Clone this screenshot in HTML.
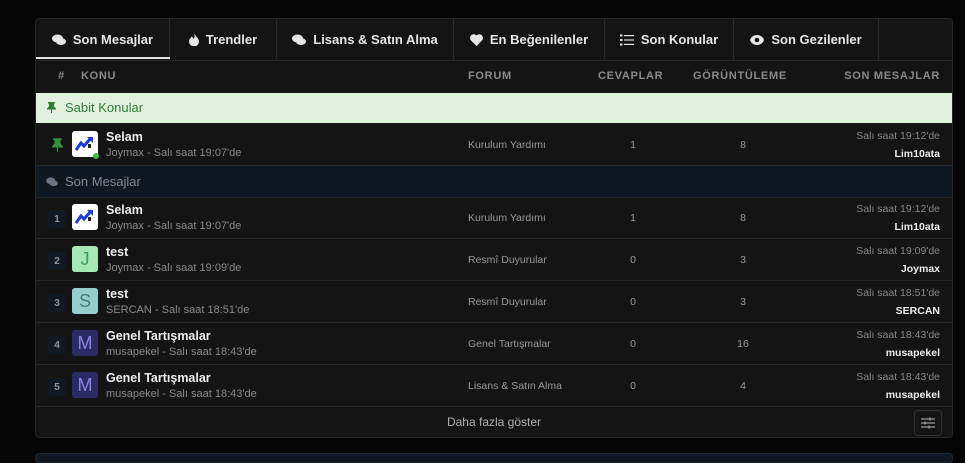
<!DOCTYPE html>
<html><head><meta charset="utf-8"><style>
*{margin:0;padding:0;box-sizing:border-box}
body{width:965px;height:458px;background:#050505;font-family:"Liberation Sans",sans-serif;position:relative;overflow:hidden;color:#ddd}
.p{position:absolute;left:35px;top:18px;width:918px;height:420px;background:#141414;border:1px solid #262626;border-radius:4px;overflow:hidden}
.tab{position:absolute;top:0;height:41px;border-right:1px solid #2a2a2a;font-size:13px;font-weight:bold;color:#e6e6e6;display:flex;align-items:center;justify-content:center;gap:7px}
.tab svg{fill:#e6e6e6}
.hl{position:absolute;left:0;right:0;height:1px;background:#262626}
.hd{position:absolute;top:51px;font-size:11px;font-weight:bold;color:#8a8a8a;letter-spacing:0.7px}
.abs{position:absolute}
.t{position:absolute;left:70px;font-size:12.5px;font-weight:bold;color:#eee}
.s{position:absolute;left:70px;font-size:11px;color:#8a8a8a}
.f{position:absolute;left:432px;font-size:10.5px;color:#9a9a9a}
.n{position:absolute;font-size:10.5px;color:#9a9a9a;width:30px;text-align:center}
.r1{position:absolute;right:12px;font-size:10.5px;color:#888;text-align:right}
.r2{position:absolute;right:12px;font-size:10.5px;font-weight:bold;color:#eee;text-align:right}
.av{position:absolute;left:36px;width:26px;height:26px;border-radius:3px;display:flex;align-items:center;justify-content:center;font-size:18px}
.rk{position:absolute;left:12px;width:18px;height:18px;border-radius:3px;background:#111a24;color:#8a96a6;font-size:10px;font-weight:bold;display:flex;align-items:center;justify-content:center}
</style></head><body>
<div class="p">
<div class="tab" style="left:0;width:134px"><svg width="14" height="12" viewBox="0 0 14 12"><ellipse cx="5.5" cy="4.5" rx="5.5" ry="4"/><ellipse cx="9" cy="7.5" rx="5" ry="3.5"/></svg>Son Mesajlar</div>
<div class="abs" style="left:0;top:38px;width:134px;height:2px;background:#e6e6e6"></div>
<div class="tab" style="left:134px;width:107px"><svg width="10" height="13" viewBox="0 0 10 13"><path d="M5 0C6 3 10 5 10 8.5A5 5 0 0 1 0 8.5C0 6 2 5 3 3C3.5 5 4.5 5.5 5 5.5C6 4 5.5 2 5 0Z"/></svg>Trendler</div>
<div class="tab" style="left:241px;width:177px"><svg width="14" height="12" viewBox="0 0 14 12"><ellipse cx="5.5" cy="4.5" rx="5.5" ry="4"/><ellipse cx="9" cy="7.5" rx="5" ry="3.5"/></svg>Lisans &amp; Satın Alma</div>
<div class="tab" style="left:418px;width:151px"><svg width="13" height="12" viewBox="0 0 13 12"><path d="M6.5 12L1 6.5A3.3 3.3 0 0 1 6.5 1.5A3.3 3.3 0 0 1 12 6.5Z"/></svg>En Beğenilenler</div>
<div class="tab" style="left:569px;width:129px"><svg width="14" height="12" viewBox="0 0 14 12"><rect x="0" y="0.5" width="2.5" height="2"/><rect x="0" y="5" width="2.5" height="2"/><rect x="0" y="9.5" width="2.5" height="2"/><rect x="4" y="1" width="10" height="1.2"/><rect x="4" y="5.4" width="10" height="1.2"/><rect x="4" y="9.8" width="10" height="1.2"/></svg>Son Konular</div>
<div class="tab" style="left:698px;width:145px"><svg width="14" height="10" viewBox="0 0 14 10"><path d="M7 0C3 0 0.5 3 0 5C0.5 7 3 10 7 10S13.5 7 14 5C13.5 3 11 0 7 0Z"/><circle cx="7" cy="5" r="2.3" fill="#141414"/></svg>Son Gezilenler</div>
<div class="hl" style="top:41px"></div>
<div class="hd" style="left:22px;top:51px">#</div>
<div class="hd" style="left:45px">KONU</div>
<div class="hd" style="left:432px">FORUM</div>
<div class="hd" style="left:562px">CEVAPLAR</div>
<div class="hd" style="left:657px">GÖRÜNTÜLEME</div>
<div class="hd" style="right:12px">SON MESAJLAR</div>
<div class="abs" style="left:0;right:0;top:74px;height:30px;background:#e2f1df;color:#2e7d32;font-size:13px;line-height:30px;padding-left:29px">Sabit Konular</div>
<svg class="abs" style="left:11px;top:83px" width="9" height="11" viewBox="0 0 9 11" fill="#2e7d32"><path d="M1 0H8V1.5H7V4.5L9 6.5V7.5H5V11H4V7.5H0V6.5L2 4.5V1.5H1Z"/></svg>
<svg class="abs" style="left:16px;top:119px" width="11" height="14" viewBox="0 0 9 11" fill="#3a8f3a"><path d="M1 0H8V1.5H7V4.5L9 6.5V7.5H5V11H4V7.5H0V6.5L2 4.5V1.5H1Z"/></svg>
<div class="av" style="top:112px;background:#fff"><svg width="22" height="20" viewBox="0 0 22 20"><path d="M2 16L7 9L10 12L17 4" stroke="#1a3cd6" stroke-width="3" fill="none"/><path d="M13 3H19V9Z" fill="#1a3cd6"/><rect x="14" y="10" width="3" height="4" fill="#222"/></svg></div>
<div class="abs" style="left:57px;top:134px;width:6px;height:6px;border-radius:50%;background:#3fb950"></div>
<div class="t" style="top:111px">Selam</div><div class="s" style="top:128px">Joymax - Salı saat 19:07'de</div>
<div class="f" style="top:120px">Kurulum Yardımı</div><div class="n" style="left:582px;top:120px">1</div><div class="n" style="left:692px;top:120px">8</div>
<div class="r1" style="top:111px">Salı saat 19:12'de</div><div class="r2" style="top:129px">Lim10ata</div>
<div class="hl" style="top:146px"></div>
<div class="abs" style="left:0;right:0;top:147px;height:31px;background:#0f1720;color:#7d8a9a;font-size:13px;line-height:31px;padding-left:29px">Son Mesajlar</div>
<svg class="abs" style="left:10px;top:158px" width="12" height="10" viewBox="0 0 14 12" fill="#6a7686"><ellipse cx="5.5" cy="4.5" rx="5.5" ry="4"/><ellipse cx="9" cy="7.5" rx="5" ry="3.5"/></svg>
<div class="hl" style="top:178px"></div>
<div class="rk" style="top:191px">1</div>
<div class="av" style="top:185px;background:#fff"><svg width="22" height="20" viewBox="0 0 22 20"><path d="M2 16L7 9L10 12L17 4" stroke="#1a3cd6" stroke-width="3" fill="none"/><path d="M13 3H19V9Z" fill="#1a3cd6"/><rect x="14" y="10" width="3" height="4" fill="#222"/></svg></div>
<div class="t" style="top:184px">Selam</div><div class="s" style="top:201px">Joymax - Salı saat 19:07'de</div>
<div class="f" style="top:193px">Kurulum Yardımı</div><div class="n" style="left:582px;top:193px">1</div><div class="n" style="left:692px;top:193px">8</div>
<div class="r1" style="top:184px">Salı saat 19:12'de</div><div class="r2" style="top:202px">Lim10ata</div>
<div class="hl" style="top:219px"></div>
<div class="rk" style="top:233px">2</div>
<div class="av" style="top:227px;background:#a3e8b5;color:#3a9b56">J</div>
<div class="t" style="top:226px">test</div><div class="s" style="top:243px">Joymax - Salı saat 19:09'de</div>
<div class="f" style="top:235px">Resmî Duyurular</div><div class="n" style="left:582px;top:235px">0</div><div class="n" style="left:692px;top:235px">3</div>
<div class="r1" style="top:226px">Salı saat 19:09'de</div><div class="r2" style="top:244px">Joymax</div>
<div class="hl" style="top:261px"></div>
<div class="rk" style="top:275px">3</div>
<div class="av" style="top:269px;background:#94cfcc;color:#3f7e80">S</div>
<div class="t" style="top:268px">test</div><div class="s" style="top:285px">SERCAN - Salı saat 18:51'de</div>
<div class="f" style="top:277px">Resmî Duyurular</div><div class="n" style="left:582px;top:277px">0</div><div class="n" style="left:692px;top:277px">3</div>
<div class="r1" style="top:268px">Salı saat 18:51'de</div><div class="r2" style="top:286px">SERCAN</div>
<div class="hl" style="top:303px"></div>
<div class="rk" style="top:317px">4</div>
<div class="av" style="top:311px;background:#2c2a66;color:#8a86e0">M</div>
<div class="t" style="top:310px">Genel Tartışmalar</div><div class="s" style="top:327px">musapekel - Salı saat 18:43'de</div>
<div class="f" style="top:319px">Genel Tartışmalar</div><div class="n" style="left:582px;top:319px">0</div><div class="n" style="left:692px;top:319px">16</div>
<div class="r1" style="top:310px">Salı saat 18:43'de</div><div class="r2" style="top:328px">musapekel</div>
<div class="hl" style="top:345px"></div>
<div class="rk" style="top:359px">5</div>
<div class="av" style="top:353px;background:#2c2a66;color:#8a86e0">M</div>
<div class="t" style="top:352px">Genel Tartışmalar</div><div class="s" style="top:369px">musapekel - Salı saat 18:43'de</div>
<div class="f" style="top:361px">Lisans &amp; Satın Alma</div><div class="n" style="left:582px;top:361px">0</div><div class="n" style="left:692px;top:361px">4</div>
<div class="r1" style="top:352px">Salı saat 18:43'de</div><div class="r2" style="top:370px">musapekel</div>
<div class="hl" style="top:387px"></div>
<div class="abs" style="left:0;right:0;top:396px;text-align:center;font-size:12px;color:#b0b0b0">Daha fazla göster</div>
<div class="abs" style="left:878px;top:391px;width:28px;height:26px;border:1px solid #333;border-radius:4px;display:flex;align-items:center;justify-content:center"><svg width="14" height="12" viewBox="0 0 14 12" stroke="#999" stroke-width="1.2"><path d="M0 2H14M0 6H14M0 10H14"/><path d="M9 0.5V3.5M4 4.5V7.5M8 8.5V11.5" stroke-width="1.5"/></svg></div>
</div>
<div class="abs" style="left:35px;top:453px;width:918px;height:10px;background:#0f1720;border:1px solid #1e2630;border-radius:4px"></div>
</body></html>
